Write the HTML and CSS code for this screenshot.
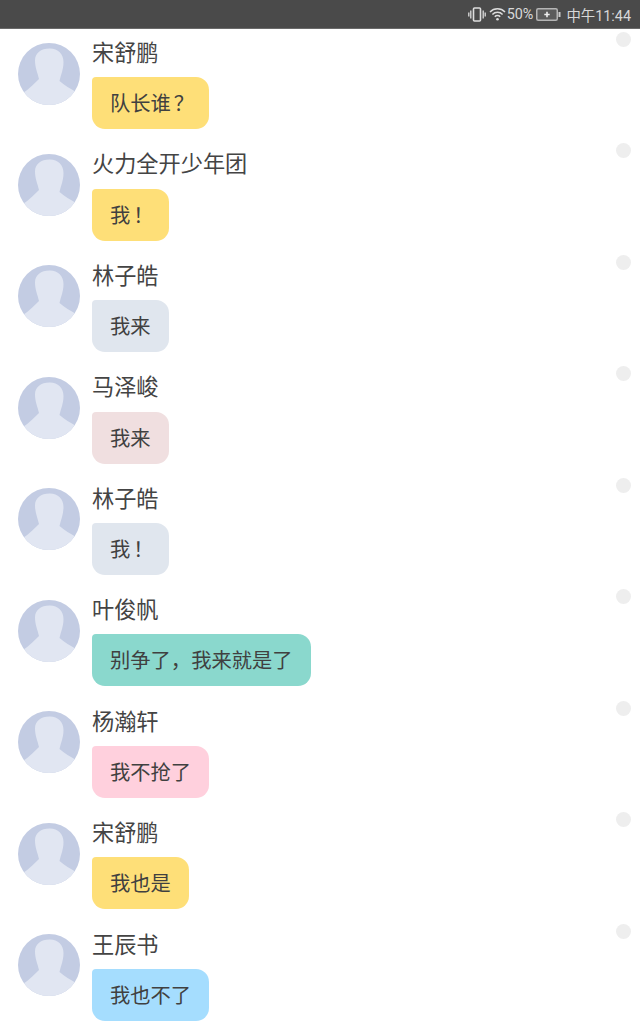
FILE: index.html
```html
<!DOCTYPE html>
<html lang="zh">
  <head>
    <meta charset="utf-8" />
    <meta name="viewport" content="width=device-width, initial-scale=1.0" />
    <title>群聊</title>
    <link rel="stylesheet" href="styles.css">
  </head>
  <body>
    <svg class="defs" width="0" height="0">
      <symbol id="avatar" viewBox="0 0 62 62">
        <clipPath id="avatar-clip"><circle cx="31" cy="31" r="31" /></clipPath>
        <g clip-path="url(#avatar-clip)">
          <rect width="62" height="62" fill="#c3cce3" />
          <path d="M31.500 5.500c-8.500 0-14.500 4.500-14.500 12 0 7 2.500 12 4 18.500-4 4-10 10-16 14l-6 14h66l-7-15c-5-3-12-7-16.500-11 1.500-6.500 4-11.500 4-19 0-8-5.500-13.500-13.500-13.500z" fill="#e1e6f2" />
        </g>
      </symbol>
    </svg>

    <div class="statusbar">
      <svg class="ic-vibrate" width="18" height="15" viewBox="0 0 18 15" fill="none" stroke="#ddd">
        <rect x="5.500" y="1" width="7" height="13" rx="1" stroke-width="1.600" />
        <path d="M2.800 3.500v8M0.800 5.500v4M15.200 3.500v8M17.200 5.500v4" stroke-width="1.300" />
      </svg>
      <svg class="ic-wifi" width="17" height="14" viewBox="0 0 17 14" fill="none" stroke="#ddd" stroke-width="1.500">
        <path d="M1 5a10.500 10.500 0 0 1 15 0M3.400 7.400a7 7 0 0 1 10.200 0M5.800 9.800a3.600 3.600 0 0 1 5.400 0" />
        <circle cx="8.500" cy="12.300" r="1.300" fill="#ddd" stroke="none" />
      </svg>
      <span class="pct">50%</span>
      <svg class="ic-batt" width="25" height="13" viewBox="0 0 25 13" fill="none">
        <rect x="0.750" y="0.750" width="20.500" height="11.500" rx="1.500" fill="#5c5c5c" stroke="#b5b5b5" stroke-width="1.500" />
        <rect x="22.500" y="4" width="2" height="5" fill="#ccc" />
        <path d="M11 3.800v5.400M8.300 6.500h5.400" stroke="#eee" stroke-width="1.600" />
      </svg>
      <span class="clock">中午11:44</span>
    </div>

    <main class="chat">
      <div class="msg">
        <svg class="avatar"><use href="#avatar" /></svg>
        <div class="body">
          <div class="name">宋舒鹏</div>
          <div class="bubble yellow">队长谁<span class="fw">？</span></div>
        </div>
        <span class="dot"></span>
      </div>
      <div class="msg">
        <svg class="avatar"><use href="#avatar" /></svg>
        <div class="body">
          <div class="name">火力全开少年团</div>
          <div class="bubble yellow">我<span class="fw">！</span></div>
        </div>
        <span class="dot"></span>
      </div>
      <div class="msg">
        <svg class="avatar"><use href="#avatar" /></svg>
        <div class="body">
          <div class="name">林子皓</div>
          <div class="bubble grey">我来</div>
        </div>
        <span class="dot"></span>
      </div>
      <div class="msg">
        <svg class="avatar"><use href="#avatar" /></svg>
        <div class="body">
          <div class="name">马泽峻</div>
          <div class="bubble rose">我来</div>
        </div>
        <span class="dot"></span>
      </div>
      <div class="msg">
        <svg class="avatar"><use href="#avatar" /></svg>
        <div class="body">
          <div class="name">林子皓</div>
          <div class="bubble grey">我<span class="fw">！</span></div>
        </div>
        <span class="dot"></span>
      </div>
      <div class="msg">
        <svg class="avatar"><use href="#avatar" /></svg>
        <div class="body">
          <div class="name">叶俊帆</div>
          <div class="bubble teal">别争了，我来就是了</div>
        </div>
        <span class="dot"></span>
      </div>
      <div class="msg">
        <svg class="avatar"><use href="#avatar" /></svg>
        <div class="body">
          <div class="name">杨瀚轩</div>
          <div class="bubble pink">我不抢了</div>
        </div>
        <span class="dot"></span>
      </div>
      <div class="msg">
        <svg class="avatar"><use href="#avatar" /></svg>
        <div class="body">
          <div class="name">宋舒鹏</div>
          <div class="bubble yellow">我也是</div>
        </div>
        <span class="dot"></span>
      </div>
      <div class="msg">
        <svg class="avatar"><use href="#avatar" /></svg>
        <div class="body">
          <div class="name">王辰书</div>
          <div class="bubble blue">我也不了</div>
        </div>
        <span class="dot"></span>
      </div>
    </main>
  </body>
</html>
```
FILE: styles.css
```css
html,
body {
  height: 1024px;
  overflow: hidden;
}
body {
  margin: 0;
  background: #fff;
  color: #444;
  font-family: Roboto, "Noto Sans CJK SC", sans-serif;
}
.defs {
  display: block;
  height: 0;
}
.statusbar {
  box-sizing: border-box;
  height: 29px;
  background: #4a4a4a;
  border-bottom: 1px solid #6a6a6a;
  color: #d8d8d8;
  font-size: 14.4px;
  display: flex;
  align-items: center;
  justify-content: flex-end;
  padding-right: 9px;
}
.ic-wifi {
  margin-left: 3px;
}
.pct {
  margin-left: 1px;
}
.ic-batt {
  margin-left: 3px;
  margin-right: 1px;
}
.clock {
  margin-left: 4px;
}
.msg {
  height: 111.45px;
  box-sizing: border-box;
  display: flex;
  position: relative;
  padding-left: 18px;
}
.avatar {
  width: 62px;
  height: 62px;
  margin-top: 13.6px;
  flex: none;
}
.body {
  margin-left: 12px;
  display: flex;
  flex-direction: column;
  align-items: flex-start;
}
.name {
  font-size: 22.2px;
  line-height: 30px;
  margin-top: 9px;
  color: #444;
}
.bubble {
  box-sizing: border-box;
  font-size: 20.3px;
  line-height: 52px;
  height: 52px;
  padding: 1px 18px 0;
  margin-top: 9.3px;
  border-radius: 4px 13px 13px 13px;
  color: #404040;
}
.fw {
  display: inline-block;
  width: 1em;
  text-indent: 3px;
}
.dot {
  position: absolute;
  left: 616px;
  top: 3px;
  width: 15px;
  height: 15px;
  border-radius: 50%;
  background: #eee;
}
.yellow {
  background: #fedf78;
}
.grey {
  background: #e0e6ee;
}
.rose {
  background: #f0dfe0;
}
.teal {
  background: #8ad8cd;
}
.pink {
  background: #ffd0dd;
}
.blue {
  background: #a5ddfe;
}
```
